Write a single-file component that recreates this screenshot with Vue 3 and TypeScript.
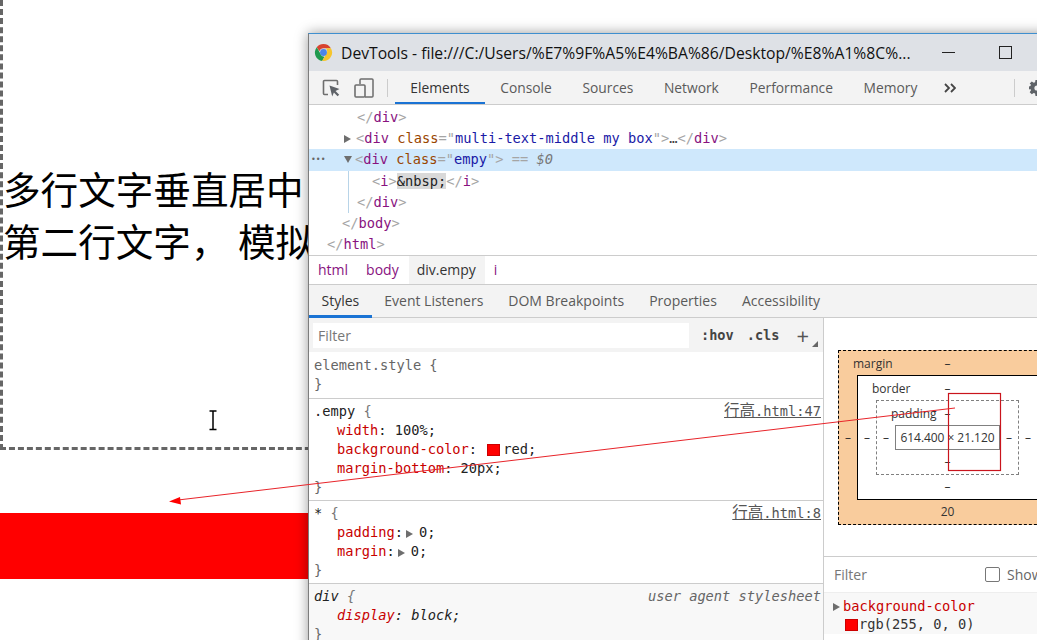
<script setup lang="ts">
const topTabs: string[] = ['Elements', 'Console', 'Sources', 'Network', 'Performance', 'Memory']
const subTabs: string[] = ['Styles', 'Event Listeners', 'DOM Breakpoints', 'Properties', 'Accessibility']
</script>

<template>
  <div class="stage">
    <div class="page">
      <div class="dashed">
        <p class="big">多行文字垂直居中</p>
        <p class="big">第二行文字， 模拟</p>
      </div>
      <div class="redbar"></div>
    </div>

    <section class="win">
      <header class="titlebar">
        <svg class="chrome" viewBox="0 0 20 20" width="19" height="19">
          <path d="M10 1a9 9 0 0 1 7.8 4.5H10a4.5 4.5 0 0 0-4.3 3.1L2.9 4.4A9 9 0 0 1 10 1z" fill="#d8432f" />
          <path d="M2.9 4.4l3.9 6.9A4.5 4.5 0 0 0 11 14.4L8.6 18.9A9 9 0 0 1 2.9 4.4z" fill="#1f9a4f" />
          <path d="M17.8 5.5A9 9 0 0 1 8.6 18.9l3.9-6.8a4.5 4.5 0 0 0-.1-6.6z" fill="#f6c52d" />
          <circle cx="10" cy="10" r="3.6" fill="#4a85e8" />
        </svg>
        <span class="title">DevTools - file:///C:/Users/%E7%9F%A5%E4%BA%86/Desktop/%E8%A1%8C%...</span>
        <span class="minbtn"></span>
        <span class="maxbtn"></span>
      </header>

      <nav class="toolbar">
        <svg class="ic-inspect" viewBox="0 0 19 18" width="19" height="18">
          <path d="M6 15.5H2.5a1 1 0 0 1-1-1V2.5a1 1 0 0 1 1-1h12a1 1 0 0 1 1 1V6" fill="none" stroke="#6e6e6e" stroke-width="1.6" />
          <path d="M7.5 6.5l10 3.6-4 1.8 3.7 3.8-1.6 1.6-3.700-3.800-1.700 4z" fill="#5f6368" />
        </svg>
        <svg class="ic-device" viewBox="0 0 20 20" width="20" height="20">
          <path d="M6 6V2a1 1 0 0 1 1-1h11a1 1 0 0 1 1 1v16a1 1 0 0 1-1 1h-7" fill="none" stroke="#6e6e6e" stroke-width="1.5" />
          <rect x="1" y="7" width="10" height="12" rx="1" fill="none" stroke="#6e6e6e" stroke-width="1.6" />
        </svg>
        <span class="vsep first"></span>
        <span v-for="(t, i) in topTabs" :key="t" class="ttab" :class="{ on: i === 0 }">{{ t }}</span>
        <svg class="more" viewBox="0 0 12 10" width="12" height="10">
          <path d="M1 1l4 4-4 4M7 1l4 4-4 4" fill="none" stroke="#444" stroke-width="1.800" />
        </svg>
        <span class="vsep last"></span>
        <svg class="gear" viewBox="0 0 16 16" width="16" height="16">
          <path d="M6.5 0h3l.4 2.2 1.4.6L13.200 1.500l2.100 2.100-1.300 1.900.6 1.400L16 6.500v3l-2.200.4-.6 1.400 1.300 1.900-2.100 2.100-1.900-1.300-1.400.6L9.500 16h-3l-.4-2.400-1.400-.6-1.900 1.300-2.100-2.100L2 10.300l-.6-1.400L0 9.500v-3l1.400-.4.6-1.400L.7 3.600l2.100-2.100 1.900 1.300 1.400-.6z" fill="#5f6368" />
          <circle cx="8" cy="8" r="2.600" fill="#f3f3f3" />
        </svg>
      </nav>

      <div class="tree">
        <div class="row ind-close"><b>&lt;/</b><i class="tag">div</i><b>&gt;</b></div>
        <div class="row ind-node"><span class="tri right"></span><b>&lt;</b><i class="tag">div</i> <i class="an">class</i><b>=</b><b>"</b><i class="av">multi-text-middle my box</i><b>"</b><b>&gt;</b><i class="ink">…</i><b>&lt;/</b><i class="tag">div</i><b>&gt;</b></div>
        <div class="row ind-node sel"><span class="dots">•••</span><span class="tri down"></span><b>&lt;</b><i class="tag">div</i> <i class="an">class</i><b>=</b><b>"</b><i class="av">empy</i><b>"</b><b>&gt;</b> <b>==</b> <em>$0</em></div>
        <div class="guide">
          <div class="row ind-child"><b>&lt;</b><i class="tag">i</i><b>&gt;</b><span class="nbsp">&amp;nbsp;</span><b>&lt;/</b><i class="tag">i</i><b>&gt;</b></div>
          <div class="row ind-close"><b>&lt;/</b><i class="tag">div</i><b>&gt;</b></div>
        </div>
        <div class="row ind-body"><b>&lt;/</b><i class="tag">body</i><b>&gt;</b></div>
        <div class="row ind-html"><b>&lt;/</b><i class="tag">html</i><b>&gt;</b></div>
      </div>

      <div class="crumbs">
        <span class="crumb pur">html</span>
        <span class="crumb pur">body</span>
        <span class="crumb cur">div.empy</span>
        <span class="crumb pur">i</span>
      </div>

      <nav class="subtabs">
        <span v-for="(t, i) in subTabs" :key="t" class="stab" :class="{ on: i === 0 }">{{ t }}</span>
      </nav>

      <div class="split">
        <div class="left">
          <div class="filterbar">
            <span class="finput">Filter</span>
            <span class="fbtn hov">:hov</span>
            <span class="fbtn cls">.cls</span>
            <span class="plus">+</span>
            <span class="corner"></span>
          </div>

          <div class="rule r1">
            <div class="ln dim">element.style {</div>
            <div class="ln dim">}</div>
          </div>
          <div class="rule r2">
            <div class="ln"><span>.empy <u class="brace">{</u></span><a><span class="cjk">行高</span>.html:47</a></div>
            <div class="ln decl"><span><s>width</s>: 100%;</span></div>
            <div class="ln decl"><span><s>background-color</s>: <span class="swatch inl"></span>red;</span></div>
            <div class="ln decl"><span><s>margin-bottom</s>: 20px;</span></div>
            <div class="ln dim">}</div>
          </div>
          <div class="rule r3">
            <div class="ln"><span>* <u class="brace">{</u></span><a><span class="cjk">行高</span>.html:8</a></div>
            <div class="ln decl"><span><s>padding</s>:<span class="tri right gap"></span>0;</span></div>
            <div class="ln decl"><span><s>margin</s>:<span class="tri right gap"></span>0;</span></div>
            <div class="ln dim">}</div>
          </div>
          <div class="rule r4">
            <div class="ln it"><span>div <u class="brace">{</u></span><span class="ua">user agent stylesheet</span></div>
            <div class="ln decl it"><span><s>display</s>: block;</span></div>
            <div class="ln dim">}</div>
          </div>
        </div>

        <div class="right">
          <div class="boxwrap">
            <div class="bx margin">
              <span class="lbl">margin</span>
              <span class="t">–</span><span class="l">–</span><span class="r">–</span><span class="bt">20</span>
              <div class="bx border">
                <span class="lbl">border</span>
                <span class="t">–</span><span class="l">–</span><span class="r">–</span><span class="bt">–</span>
                <div class="bx padding">
                  <span class="lbl">padding</span>
                  <span class="t">–</span><span class="l">–</span><span class="r">–</span><span class="bt">–</span>
                  <div class="content">614.400 × 21.120</div>
                </div>
              </div>
            </div>
          </div>
          <div class="cfilter">
            <span class="cf-label">Filter</span>
            <span class="check"></span>
            <span class="show">Show all</span>
          </div>
          <div class="computed">
            <div class="cline"><span class="tri right cm"></span><s>background-color</s></div>
            <div class="cline val"><span class="swatch big-s"></span>rgb(255, 0, 0)</div>
          </div>
        </div>
      </div>
    </section>

    <svg class="marks" viewBox="0 0 1037 640" width="1037" height="640">
      <rect x="948.500" y="393.500" width="52" height="77" fill="none" stroke="#c9141c" stroke-width="1.200" />
      <line x1="955" y1="408" x2="178" y2="500" stroke="#e8242a" stroke-width="1" />
      <path d="M169 501.500l11-4.500 1 7.500z" fill="#f00" />
      <path d="M209.500 411h7M209.500 429.500h7M213 411v18.500" fill="none" stroke="#000" stroke-width="1.500" />
    </svg>
  </div>
</template>

<style>
html, body { margin: 0; overflow: hidden; background: #fff; }
</style>

<style scoped>
.stage { position: relative; width: 1037px; height: 640px; overflow: hidden; background: #fff; font-family: "Open Sans", "Noto Sans", sans-serif; }
.page { width: 1037px; }
.dashed { box-sizing: border-box; height: 450px; border-left: 3px dashed #666; border-bottom: 3px dashed #666; padding: 162px 0 0 0; }
.big { margin: 0; height: 52px; font: 37.600px/52px "Noto Sans CJK SC", sans-serif; color: #000; white-space: nowrap; word-spacing: 1px; }
.redbar { height: 66px; margin-top: 63px; background: #f00; }

.win { position: absolute; left: 308px; top: 33px; width: 800px; height: 640px; background: #fff; border-top: 1px solid #3f8fcf; border-left: 1px solid #7d7d7d; box-shadow: 0 0 12px rgba(0,0,0,.4); box-sizing: border-box; display: flex; flex-direction: column; }
.titlebar { height: 37px; flex: none; background: #dee1e6; display: flex; align-items: center; padding-left: 5px; }
.chrome { flex: none; }
.title { margin-left: 8px; font-size: 15.700px; color: #111; white-space: nowrap; width: 574px; }
.minbtn { width: 13px; height: 1px; background: #222; margin-left: 27px; }
.maxbtn { width: 11px; height: 11px; border: 1px solid #222; margin-left: 44px; }

.toolbar { height: 33px; flex: none; background: #f3f3f3; border-bottom: 1px solid #ccc; display: flex; align-items: center; padding-left: 13px; box-sizing: content-box; }
.ic-device { margin-left: 13px; }
.vsep { width: 1px; height: 18px; background: #ccc; flex: none; }
.vsep.first { margin: 0 7px 0 13px; }
.vsep.last { margin-left: 58px; }
.ttab { height: 33px; line-height: 33px; padding: 0 15.300px; font-size: 13.800px; color: #5a5a5a; box-sizing: border-box; white-space: nowrap; }
.ttab.on { color: #333; border-bottom: 2px solid #1a73d4; }
.more { margin-left: 11px; flex: none; }
.gear { margin-left: 14px; }

.tree { height: 151px; flex: none; padding-top: 1.500px; box-sizing: border-box; border-bottom: 1px solid #ccc; font: 13.700px "DejaVu Sans Mono", monospace; overflow: hidden; }
.row { height: 21.200px; line-height: 21.200px; white-space: pre; position: relative; color: #333; display: block; }
.row b { font-weight: normal; color: #a5a5a5; }
.tag { font-style: normal; color: #881280; }
.an { font-style: normal; color: #994500; }
.av { font-style: normal; color: #1a1aa6; }
.ink { font-style: normal; color: #444; }
.row em { color: #777; }
.ind-close { padding-left: 48px; }
.ind-node { padding-left: 35px; }
.ind-child { padding-left: 63px; }
.ind-body { padding-left: 33px; }
.ind-html { padding-left: 18px; }
.sel { background: #cfe8fc; height: 22px; line-height: 21px; }
.dots { position: absolute; left: 2px; top: 0; font-size: 8px; color: #666; }
.guide { position: relative; }
.guide::before { content: ""; position: absolute; left: 39px; top: 0; bottom: 0; width: 1px; background: #b8d4e8; }
.nbsp { background: #d9d9d9; color: #222; }
.tri { display: inline-block; width: 0; height: 0; }
.tri.right { border-left: 7px solid #6e6e6e; border-top: 4.500px solid transparent; border-bottom: 4.500px solid transparent; margin-right: 5px; }
.tri.down { border-top: 7px solid #6e6e6e; border-left: 4.500px solid transparent; border-right: 4.500px solid transparent; margin-right: 3px; vertical-align: 1px; }
.tri.gap { margin: 0 6px 0 3px; vertical-align: -1px; }

.crumbs { height: 28px; flex: none; display: flex; align-items: stretch; border-bottom: 1px solid #ccc; font-size: 14px; }
.crumb { padding: 0 9px; line-height: 28px; white-space: nowrap; }
.pur { color: #881280; }
.cur { background: #f3f3f3; color: #333; margin-left: 1px; padding-left: 8px; }

.subtabs { height: 33px; flex: none; background: #f3f3f3; display: flex; border-bottom: 1px solid #ccc; box-sizing: border-box; }
.stab { padding: 0 12.500px; line-height: 32px; font-size: 14px; color: #5a5a5a; white-space: nowrap; box-sizing: border-box; height: 33px; }
.stab.on { color: #333; border-bottom: 3px solid #1a73d4; }

.split { flex: 1; display: flex; min-height: 0; }
.left { width: 514px; flex: none; border-right: 1px solid #ccc; }
.filterbar { height: 34px; background: #f3f3f3; position: relative; display: flex; align-items: center; box-sizing: border-box; padding-left: 4px; }
.finput { width: 376px; height: 25px; line-height: 25px; background: #fff; font-size: 14px; color: #777; padding-left: 5px; box-sizing: border-box; }
.fbtn { font: bold 13.600px "DejaVu Sans Mono", monospace; color: #444; }
.hov { margin-left: 12px; }
.cls { margin-left: 13px; }
.plus { margin-left: 17px; font-size: 22px; line-height: 24px; color: #555; }
.corner { position: absolute; right: 5px; bottom: 5px; border-left: 6px solid transparent; border-bottom: 6px solid #666; }

.rule { font: 13.700px "DejaVu Sans Mono", monospace; color: #222; padding: 3px 2px 0 5px; border-bottom: 1px solid #ccc; }
.r1 { padding-top: 4px; padding-bottom: 4px; }
.r2 { padding-bottom: 3px; }
.r3 { padding-bottom: 3px; }
.r4 { background: #f8f8f8; border-bottom: 0; height: 60px; }
.ln { height: 19px; line-height: 19px; display: flex; justify-content: space-between; white-space: pre; }
.dim { color: #666; }
.brace { text-decoration: none; color: #777; }
.decl { padding-left: 23px; }
.ln s { text-decoration: none; color: #c80000; }
.ln a { color: #555; text-decoration: underline; font-family: "DejaVu Sans Mono", "Noto Sans CJK SC", monospace; }
.cjk { font-size: 15.500px; }
.it { font-style: italic; }
.ua { color: #666; }
.swatch { display: inline-block; width: 13px; height: 12px; background: #f00; border: 1px solid #c00; box-sizing: border-box; margin-right: 3px; vertical-align: -2px; }
.swatch.inl { margin-left: 2px; }

.right { flex: 1; min-width: 0; }
.boxwrap { height: 239px; padding: 32px 0 0 14px; box-sizing: border-box; border-bottom: 1px solid #ccc; }
.bx { position: relative; display: grid; grid-template-columns: 18px auto 18px; grid-template-rows: 24px auto 24px; width: max-content; font-size: 12px; color: #333; text-align: center; line-height: 24px; box-sizing: border-box; }
.margin { background: #f9cc9d; border: 1px dashed #000; }
.border { background: #fff; border: 1px solid #000; grid-area: 2 / 2; }
.padding { border: 1px dashed #808080; grid-area: 2 / 2; }
.lbl { position: absolute; left: 14px; top: 0; line-height: 26px; }
.t { grid-area: 1 / 2; line-height: 26px; }
.l { grid-area: 2 / 1; align-self: center; }
.r { grid-area: 2 / 3; align-self: center; }
.bt { grid-area: 3 / 2; }
.content { grid-area: 2 / 2; width: 105px; height: 25px; border: 1px solid #808080; box-sizing: border-box; line-height: 23px; white-space: nowrap; font-size: 12px; letter-spacing: -.05px; }

.cfilter { height: 35px; display: flex; align-items: center; padding-left: 10px; font-size: 14px; color: #777; border-bottom: 1px solid #eee; }
.cf-label { width: 151px; }
.check { width: 13px; height: 13px; border: 1px solid #777; border-radius: 2px; flex: none; }
.show { margin-left: 7px; color: #666; white-space: nowrap; }
.computed { background: #f8f8f8; font: 13.700px "DejaVu Sans Mono", monospace; color: #333; height: 41px; padding: 4px 0 0 9px; box-sizing: border-box; }
.cline { height: 18px; line-height: 18px; white-space: pre; }
.cline s { text-decoration: none; color: #c80000; }
.tri.cm { margin-right: 3px; vertical-align: 0; }
.val { padding-left: 12px; }
.big-s { margin-right: 1px; vertical-align: -2px; }

.marks { position: absolute; left: 0; top: 0; pointer-events: none; }
</style>
